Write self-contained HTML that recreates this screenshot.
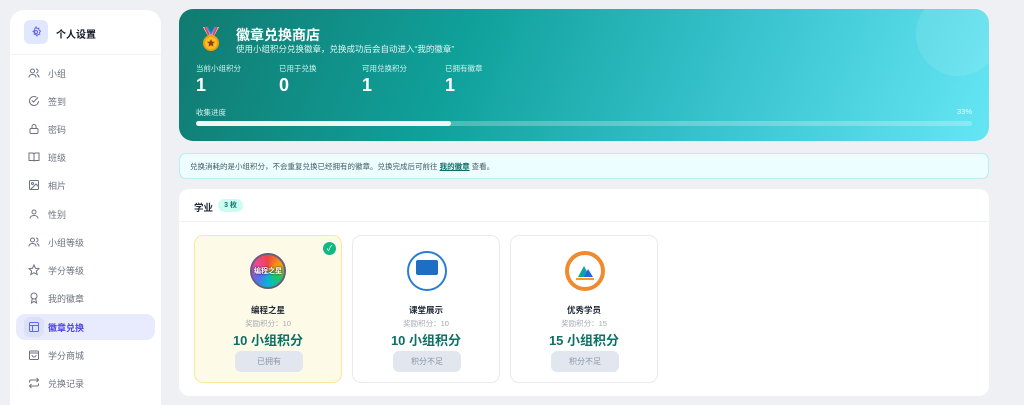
<!DOCTYPE html>
<html><head><meta charset="utf-8"><style>
*{box-sizing:border-box;margin:0;padding:0}
html,body{width:1024px;height:405px;overflow:hidden}
body{background:#eef0f4;font-family:"Liberation Sans","Noto Sans CJK SC",sans-serif;position:relative;color:#1f2937}
.side{position:absolute;left:10px;top:10px;width:151px;height:395px;background:#fff;border-radius:14px 14px 0 0}
.hd{position:absolute;left:14px;top:10px;width:24px;height:24px;border-radius:6px;background:#e0e7ff;display:flex;align-items:center;justify-content:center}
.ht{position:absolute;left:46px;top:16px;font-size:10px;font-weight:bold;color:#111827}
.dv{position:absolute;left:0;right:0;top:44px;border-top:1px solid #f1f2f5}
.it{position:absolute;left:6px;width:139px;height:26px;border-radius:9px;font-size:9px;color:#6b7280;display:flex;align-items:center}
.it svg{position:absolute;left:12px;top:7px}
.it span{position:absolute;left:32px}
.it.a{background:#e8ebfd;color:#4f46e5;font-weight:bold}
.it.a .ib{position:absolute;left:8px;top:3px;width:20px;height:20px;border-radius:6px;background:#dbe0fb}
.hero{position:absolute;left:179px;top:9px;width:810px;height:132px;border-radius:14px;background:linear-gradient(112deg,#117a70 0%,#10a19b 35%,#3cc6d2 70%,#66e6f5 100%);overflow:hidden;color:#fff}
.circ{position:absolute;left:737px;top:-17px;width:84px;height:84px;border-radius:50%;background:rgba(255,255,255,.1)}
.lab{position:absolute;font-size:7.5px;color:#d1f3ef;top:54px}
.val{position:absolute;font-size:18px;font-weight:bold;top:66px}
.note{position:absolute;left:179px;top:153px;width:810px;height:26px;border-radius:7px;background:#ecfeff;border:1px solid #b5f0f8;font-size:7.5px;color:#3f5b63;padding:7px 10px}
.sec{position:absolute;left:179px;top:189px;width:810px;height:207px;background:#fff;border-radius:10px}
.card{position:absolute;top:46px;width:148px;height:148px;border-radius:9px;border:1px solid #e8eaee;background:#fff;text-align:center}
.card .nm{position:absolute;top:68px;width:100%;font-size:8.5px;font-weight:bold;color:#1f2937}
.card .rw{position:absolute;top:82px;width:100%;font-size:7.5px;color:#a3aab5}
.card .pt{position:absolute;top:94px;width:100%;font-size:13px;font-weight:bold;color:#0f6f66}
.card .bt{position:absolute;top:115px;left:40px;width:68px;height:21px;border-radius:6px;background:#e2e7ef;color:#8b95a5;font-size:8px;line-height:21px}
.card .im{position:absolute;left:54px;top:15px;width:40px;height:40px;border-radius:50%}
</style></head><body>
<div class="side">
 <div class="hd"><svg width="12" height="12" viewBox="0 0 24 24" fill="none" stroke="#6366f1" stroke-width="2"><circle cx="12" cy="12" r="3"/><path d="M12 2l2 3 3.5-.5.5 3.5 3 2-2 3 .5 3.5-3.5.5-2 3-2-3-3.5-.5.5-3.5-3-2 3-2 .5-3.5L10 5z"/></svg></div>
 <div class="ht">个人设置</div>
 <div class="dv"></div>
 <div class="it" style="top:50px"><svg width="12" height="12" viewBox="0 0 24 24" fill="none" stroke="#6b7280" stroke-width="2"><circle cx="9" cy="8" r="4"/><path d="M2 21c0-4 3-6 7-6s7 2 7 6M16 4a4 4 0 010 8M22 21c0-3-2-5-4-6"/></svg><span>小组</span></div>
 <div class="it" style="top:78px"><svg width="12" height="12" viewBox="0 0 24 24" fill="none" stroke="#6b7280" stroke-width="2"><path d="M21 12a9 9 0 11-4-7.5"/><path d="M8 11l3 3 9-9"/></svg><span>签到</span></div>
 <div class="it" style="top:106px"><svg width="12" height="12" viewBox="0 0 24 24" fill="none" stroke="#6b7280" stroke-width="2"><rect x="4" y="11" width="16" height="10" rx="2"/><path d="M8 11V7a4 4 0 018 0v4"/></svg><span>密码</span></div>
 <div class="it" style="top:134px"><svg width="12" height="12" viewBox="0 0 24 24" fill="none" stroke="#6b7280" stroke-width="2"><path d="M2 4h7a3 3 0 013 3v14a2 2 0 00-2-2H2zM22 4h-7a3 3 0 00-3 3v14a2 2 0 012-2h8z"/></svg><span>班级</span></div>
 <div class="it" style="top:162px"><svg width="12" height="12" viewBox="0 0 24 24" fill="none" stroke="#6b7280" stroke-width="2"><rect x="3" y="3" width="18" height="18" rx="2"/><circle cx="9" cy="9" r="2"/><path d="M21 15l-5-5L5 21"/></svg><span>相片</span></div>
 <div class="it" style="top:191px"><svg width="12" height="12" viewBox="0 0 24 24" fill="none" stroke="#6b7280" stroke-width="2"><circle cx="12" cy="8" r="4"/><path d="M4 21c0-4 4-6 8-6s8 2 8 6"/></svg><span>性别</span></div>
 <div class="it" style="top:219px"><svg width="12" height="12" viewBox="0 0 24 24" fill="none" stroke="#6b7280" stroke-width="2"><circle cx="9" cy="8" r="4"/><path d="M2 21c0-4 3-6 7-6s7 2 7 6M16 4a4 4 0 010 8M22 21c0-3-2-5-4-6"/></svg><span>小组等级</span></div>
 <div class="it" style="top:247px"><svg width="12" height="12" viewBox="0 0 24 24" fill="none" stroke="#6b7280" stroke-width="2"><path d="M12 2l3 6.5 7 .8-5.2 4.8 1.5 7L12 17.5 5.7 21l1.5-7L2 9.3l7-.8z"/></svg><span>学分等级</span></div>
 <div class="it" style="top:275px"><svg width="12" height="12" viewBox="0 0 24 24" fill="none" stroke="#6b7280" stroke-width="2"><circle cx="12" cy="8" r="6"/><path d="M8.5 13L7 22l5-3 5 3-1.5-9"/></svg><span>我的徽章</span></div>
 <div class="it a" style="top:304px"><div class="ib"></div><svg width="12" height="12" viewBox="0 0 24 24" fill="none" stroke="#6366f1" stroke-width="2" style="z-index:1"><rect x="3" y="3" width="18" height="18" rx="2"/><path d="M3 9h18M9 9v12"/></svg><span>徽章兑换</span></div>
 <div class="it" style="top:332px"><svg width="12" height="12" viewBox="0 0 24 24" fill="none" stroke="#6b7280" stroke-width="2"><rect x="3" y="4" width="18" height="17" rx="2"/><path d="M3 8h18M8 12a4 4 0 008 0"/></svg><span>学分商城</span></div>
 <div class="it" style="top:360px"><svg width="12" height="12" viewBox="0 0 24 24" fill="none" stroke="#6b7280" stroke-width="2"><path d="M17 2l4 4-4 4M3 11V9a3 3 0 013-3h15M7 22l-4-4 4-4M21 13v2a3 3 0 01-3 3H3"/></svg><span>兑换记录</span></div>
</div>

<div class="hero">
 <div class="circ"></div>
 <svg style="position:absolute;left:20px;top:17px" width="24" height="26" viewBox="0 0 24 26"><path d="M4 1l5 9h6l5-9h-4l-4 7-4-7z" fill="#e5e7eb"/><path d="M6 1l4 8M18 1l-4 8" stroke="#ef4444" stroke-width="2"/><path d="M8 1l4 7 4-7" stroke="#3b82f6" stroke-width="1.5" fill="none"/><circle cx="12" cy="17" r="8" fill="#f59e0b"/><circle cx="12" cy="17" r="6" fill="#fbbf24"/><path d="M12 13l1.2 2.6 2.8.3-2.1 1.9.6 2.8L12 19.2 9.5 20.6l.6-2.8-2.1-1.9 2.8-.3z" fill="#92400e"/></svg>
 <div style="position:absolute;left:57px;top:16px;font-size:14px;font-weight:bold">徽章兑换商店</div>
 <div style="position:absolute;left:57px;top:34px;font-size:8.5px;color:#e0f7f4">使用小组积分兑换徽章，兑换成功后会自动进入“我的徽章”</div>
 <div class="lab" style="left:17px">当前小组积分</div><div class="val" style="left:17px">1</div>
 <div class="lab" style="left:100px">已用于兑换</div><div class="val" style="left:100px">0</div>
 <div class="lab" style="left:183px">可用兑换积分</div><div class="val" style="left:183px">1</div>
 <div class="lab" style="left:266px">已拥有徽章</div><div class="val" style="left:266px">1</div>
 <div class="lab" style="left:17px;top:98px">收集进度</div>
 <div class="lab" style="left:778px;top:98px;color:#e6fbfd">33%</div>
 <div style="position:absolute;left:17px;top:112px;width:776px;height:5px;border-radius:3px;background:rgba(255,255,255,.25)"><div style="width:255px;height:5px;border-radius:3px;background:#f1f5f4"></div></div>
</div>

<div class="note">兑换消耗的是小组积分，不会重复兑换已经拥有的徽章。兑换完成后可前往 <b style="color:#0f6f66;text-decoration:underline">我的徽章</b> 查看。</div>

<div class="sec">
 <div style="position:absolute;left:15px;top:11px;font-size:9.5px;font-weight:bold">学业</div>
 <div style="position:absolute;left:39px;top:10px;width:25px;height:13px;border-radius:7px;background:#ccfbf1;font-size:7px;color:#0f766e;text-align:center;line-height:13px;font-weight:bold">3 枚</div>
 <div style="position:absolute;left:0;right:0;top:32px;border-top:1px solid #f1f2f5"></div>
 <div class="card" style="left:15px;background:#fefae8;border-color:#fbe7a0">
  <div style="position:absolute;right:5px;top:6px;width:13px;height:13px;border-radius:50%;background:#10b981;color:#fff;font-size:8px;line-height:13px">✓</div>
  <div class="im" style="left:55px;width:36px;height:36px;top:17px;background:conic-gradient(#ef4444,#f59e0b,#22c55e,#06b6d4,#6366f1,#ec4899,#ef4444);border:2px solid #6b5b7b"><div style="font-size:7px;font-weight:bold;color:#fff;margin-top:11px;text-shadow:0 0 2px #000">编程之星</div></div>
  <div class="nm">编程之星</div><div class="rw">奖励积分：10</div><div class="pt">10 小组积分</div><div class="bt">已拥有</div>
 </div>
 <div class="card" style="left:173px">
  <div class="im" style="border:2px solid #2b7cd3;background:#fff"><div style="margin:7px auto 0;width:22px;height:15px;background:#1d6fc4;border-radius:2px"></div></div>
  <div class="nm">课堂展示</div><div class="rw">奖励积分：10</div><div class="pt">10 小组积分</div><div class="bt">积分不足</div>
 </div>
 <div class="card" style="left:331px">
  <div class="im" style="border:4px solid #ef8a2e;background:#fff"><svg width="32" height="32" viewBox="0 0 32 32"><path d="M9 22l6-11 6 11z" fill="#0ea5a0"/><path d="M15 22l4-8 5 8z" fill="#2563eb"/><path d="M7 24h18" stroke="#f59e0b" stroke-width="2"/></svg></div>
  <div class="nm">优秀学员</div><div class="rw">奖励积分：15</div><div class="pt">15 小组积分</div><div class="bt">积分不足</div>
 </div>
</div>
</body></html>
